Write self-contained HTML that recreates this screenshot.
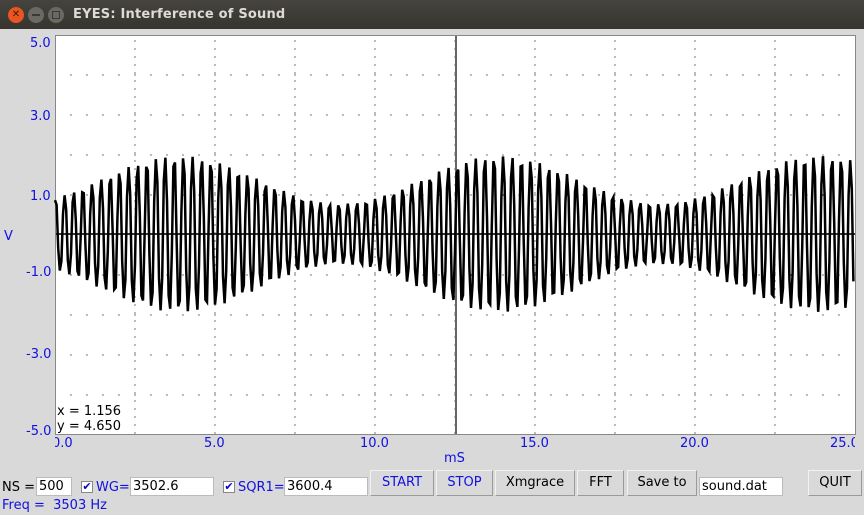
<!DOCTYPE html>
<html><head><meta charset="utf-8"><style>
*{margin:0;padding:0;box-sizing:border-box}
body{width:864px;height:515px;background:#d9d9d9;font-family:"DejaVu Sans","Liberation Sans",sans-serif;font-size:13px;position:relative;overflow:hidden}
.tb{position:absolute;left:0;top:0;width:864px;height:29px;background:linear-gradient(#45443f,#35342f);color:#dfdbd2;font-weight:bold;font-size:13px}
.tb .t{position:absolute;left:73px;top:7px;letter-spacing:0.2px}
.c{position:absolute;top:7px;width:16px;height:16px;border-radius:50%}
.lab{position:absolute;color:#1010e0;font-size:13px}
.btn{position:absolute;top:470px;height:26px;background:#d9d9d9;border:1px solid #f2f2f2;border-right-color:#9a9a9a;border-bottom-color:#9a9a9a;text-align:center;line-height:24px;font-size:13px}
.in{position:absolute;background:#fff;border:1px solid #bbb;height:19px;top:477px;line-height:17px;padding-left:2px;font-size:13px}
.cb{position:absolute;top:481px;width:12px;height:12px;background:#fff;border:1px solid #888;color:#00c;font-size:11px;line-height:10px;text-align:center}
</style></head><body>
<div class="tb"><div class="c" style="left:8px;background:#e95420;color:#3a1a0a;font-size:10px;text-align:center;line-height:16px">✕</div><div class="c" style="left:28px;background:#6a6964;"><div style="position:absolute;left:4px;top:7px;width:8px;height:2px;background:#3a3a36"></div></div><div class="c" style="left:48px;background:#6a6964"><div style="position:absolute;left:4px;top:4px;width:8px;height:8px;border:1px solid #3a3a36"></div></div><span class="t">EYES: Interference of Sound</span></div>
<svg style="position:absolute;left:0;top:0" width="864" height="515" id="s">
<rect x="55.5" y="35.5" width="800" height="399" fill="#fff" stroke="#888"/>
<g id="grid" stroke="#777" stroke-width="1"></g>
<line x1="456" y1="36" x2="456" y2="434" stroke="#666" stroke-width="2"/>
<line x1="56" y1="234" x2="855" y2="234" stroke="#333" stroke-width="2"/>
<polyline id="w" fill="none" stroke="#000" stroke-width="2.5"/>
</svg>
<div class="lab" style="left:30px;top:36px">5.0</div>
<div class="lab" style="left:30px;top:109px">3.0</div>
<div class="lab" style="left:30px;top:189px">1.0</div>
<div class="lab" style="left:4px;top:229px">V</div>
<div class="lab" style="left:26px;top:265px">-1.0</div>
<div class="lab" style="left:26px;top:347px">-3.0</div>
<div class="lab" style="left:26px;top:424px">-5.0</div>
<div style="position:absolute;left:57px;top:404px;font-size:13px">x = 1.156</div>
<div style="position:absolute;left:57px;top:419px;font-size:13px">y = 4.650</div>
<div class="lab" style="left:55px;top:436px;width:20px;overflow:hidden;white-space:nowrap"><span style="margin-left:-3px">0.0</span></div>
<div class="lab" style="left:204px;top:436px">5.0</div>
<div class="lab" style="left:360px;top:436px">10.0</div>
<div class="lab" style="left:520px;top:436px">15.0</div>
<div class="lab" style="left:680px;top:436px">20.0</div>
<div class="lab" style="left:830px;top:436px;width:25px;overflow:hidden;white-space:nowrap">25.0</div>
<div class="lab" style="left:444px;top:451px">mS</div>
<div style="position:absolute;left:2px;top:480px">NS =</div>
<div class="in" style="left:36px;width:36px">500</div>
<div class="cb" style="left:81px">✔</div><div class="lab" style="left:96px;top:480px">WG=</div>
<div class="in" style="left:130px;width:84px">3502.6</div>
<div class="cb" style="left:223px">✔</div><div class="lab" style="left:238px;top:480px">SQR1=</div>
<div class="in" style="left:284px;width:84px">3600.4</div>
<div class="lab" style="left:2px;top:498px">Freq =&nbsp; 3503 Hz</div>
<div class="btn" style="left:370px;width:64px;color:#1010e0">START</div>
<div class="btn" style="left:436px;width:57px;color:#1010e0">STOP</div>
<div class="btn" style="left:495px;width:80px">Xmgrace</div>
<div class="btn" style="left:577px;width:47px">FFT</div>
<div class="btn" style="left:627px;width:70px">Save to</div>
<div class="in" style="left:699px;width:84px">sound.dat</div>
<div class="btn" style="left:808px;width:54px">QUIT</div>
<script>
var g=document.getElementById('grid'),h='';
for(var i=1;i<10;i++){var x=55+80*i;for(var y=40;y<434;y+=8)h+='<line x1="'+x+'" y1="'+y+'" x2="'+x+'" y2="'+(y+2)+'"/>';}
for(var v=-4;v<=4;v++){if(v==0)continue;var y=234-v*40;for(var x=71;x<855;x+=16)h+='<line x1="'+x+'" y1="'+y+'" x2="'+x+'" y2="'+(y+2)+'"/>';}
g.innerHTML=h;
var p=[];
for(var n=0;n<500;n++){var t=n*0.05;var A=1.35-0.6*Math.cos(2*Math.PI*(t-8.9)/10.0);
var s=Math.sin(2*Math.PI*3.503*t+1.2);var v=A*(s>0?Math.pow(s,0.7):-Math.pow(-s,0.7));
p.push((55+t*32).toFixed(1)+','+(234-v*40).toFixed(1));}
document.getElementById('w').setAttribute('points',p.join(' '));
</script>
</body></html>
